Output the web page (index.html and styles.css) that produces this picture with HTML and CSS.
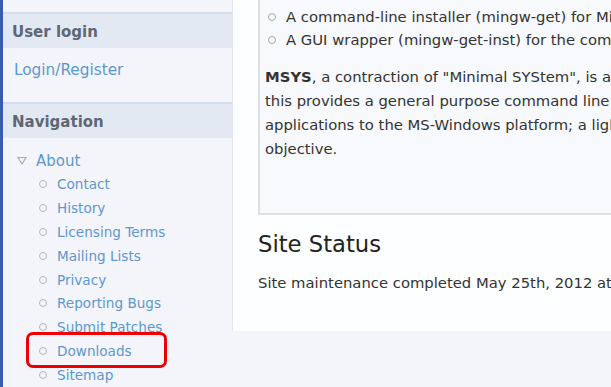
FILE: index.html
```html
<!DOCTYPE html>
<html lang="en">
<head>
  <meta charset="UTF-8" />
  <title>MinGW | Minimalist GNU for Windows</title>
  <link rel="stylesheet" href="styles.css">
</head>
<body>

<div class="layout">
  <div class="sidebar">
    <div class="block">
      <h2 class="block-title">User login</h2>
      <div class="block-body">
        <a href="#" class="login-link">Login/Register</a>
      </div>
    </div>

    <div class="block">
      <h2 class="block-title">Navigation</h2>
      <ul class="menu">
        <li class="expanded">
          <a href="#">About</a>
          <ul class="submenu">
            <li><a href="#">Contact</a></li>
            <li><a href="#">History</a></li>
            <li><a href="#">Licensing Terms</a></li>
            <li><a href="#">Mailing Lists</a></li>
            <li><a href="#">Privacy</a></li>
            <li><a href="#">Reporting Bugs</a></li>
            <li><a href="#">Submit Patches</a></li>
            <li class="highlight"><a href="#">Downloads</a></li>
            <li><a href="#">Sitemap</a></li>
          </ul>
        </li>
      </ul>
    </div>
  </div>

  <div class="main">
    <div class="content-box">
      <ul class="bullets">
        <li>A command-line installer (mingw-get) for MinGW and MSYS deployment</li>
        <li>A GUI wrapper (mingw-get-inst) for the command-line installer</li>
      </ul>
      <p class="intro">
        <strong>MSYS</strong>, a contraction of "Minimal SYStem", is a Bourne Shell command line interpreter system. Offered as an alternative to Microsoft's cmd.exe,<br>
        this provides a general purpose command line environment, which is particularly suited to use with MinGW, for porting of many Open Source<br>
        applications to the MS-Windows platform; a light-weight fork of Cygwin-1.3, it includes a small selection of Unix tools, chosen to facilitate that<br>
        objective.
      </p>
    </div>

    <h2 class="section-title">Site Status</h2>
    <p class="status">Site maintenance completed May 25th, 2012 at 18:00 UTC.</p>
  </div>
</div>

</body>
</html>
```

FILE: styles.css
```css
*,
*::before,
*::after {
  box-sizing: border-box;
}

body {
  margin: 0;
  height: 387px;
  overflow: hidden;
  background: #f3f5fa;
  border-left: 3px solid #3a5dab;
  font-family: 'DejaVu Sans', Verdana, sans-serif;
  color: #333;
}

a {
  color: #5e97cf;
  text-decoration: none;
}

.layout {
  display: flex;
  align-items: flex-start;
  white-space: nowrap;
}

/* sidebar */

.sidebar {
  width: 229px;
  flex-shrink: 0;
  padding-top: 12px;
}

.block-title {
  margin: 0;
  height: 36px;
  line-height: 37px;
  padding-left: 9px;
  background: #e3e9f3;
  border-top: 2px solid #d3ddec;
  font-size: 15px;
  font-weight: bold;
  color: #5f6775;
  overflow: hidden;
}

.block-body {
  padding: 11px 11px 0;
  height: 54px;
  font-size: 15.3px;
  line-height: 22px;
}

.menu {
  list-style: none;
  margin: 0;
  padding: 13px 0 0 13px;
  font-size: 15px;
}

.menu > li > a {
  display: block;
  line-height: 20px;
  padding-left: 20px;
  position: relative;
}

.expanded > a::before {
  content: "";
  position: absolute;
  left: 1px;
  top: 6px;
  width: 0;
  height: 0;
  border-left: 5px solid transparent;
  border-right: 5px solid transparent;
  border-top: 8px solid #aaa;
}

.expanded > a::after {
  content: "";
  position: absolute;
  left: 3px;
  top: 7px;
  border-left: 3px solid transparent;
  border-right: 3px solid transparent;
  border-top: 5px solid #f3f5fa;
}

.submenu {
  list-style: none;
  margin: 0;
  padding: 1px 0 0 22px;
  font-size: 13.6px;
}

.submenu li {
  position: relative;
  height: 23.9px;
  line-height: 24px;
  padding-left: 19px;
}

.submenu li::before {
  content: "";
  position: absolute;
  left: 1px;
  top: 8px;
  width: 8px;
  height: 8px;
  border: 1px solid #b5b5b5;
  border-radius: 50%;
}

.highlight::after {
  content: "";
  position: absolute;
  left: -12px;
  top: -7px;
  width: 141px;
  height: 36px;
  border: 3px solid #ee0000;
  border-radius: 7px;
}

/* main */

.main {
  flex: 1;
  overflow: hidden;
  background: #fdfeff;
  border-left: 1px solid #dfe6f0;
  padding: 0 0 30px 25px;
  min-height: 331px;
}

.content-box {
  background: #f7f9fd;
  border-left: 2px solid #dcdfe4;
  border-bottom: 2px solid #dcdfe4;
  padding: 5px 0 52px 5px;
  font-size: 14.8px;
  color: #333;
}

.bullets {
  list-style: none;
  margin: 0;
  padding: 0 0 0 21px;
}

.bullets li {
  position: relative;
  line-height: 23px;
}

.bullets li::before {
  content: "";
  position: absolute;
  left: -18px;
  top: 8px;
  width: 8px;
  height: 8px;
  border: 1px solid #aaa;
  border-radius: 50%;
}

.intro {
  margin: 14px 0 0;
  line-height: 24px;
}

.section-title {
  margin: 14px 0 0;
  font-size: 22.7px;
  font-weight: normal;
  color: #222;
  line-height: 30px;
}

.status {
  margin: 14px 0 0;
  font-size: 14.8px;
  line-height: 20px;
}
```
